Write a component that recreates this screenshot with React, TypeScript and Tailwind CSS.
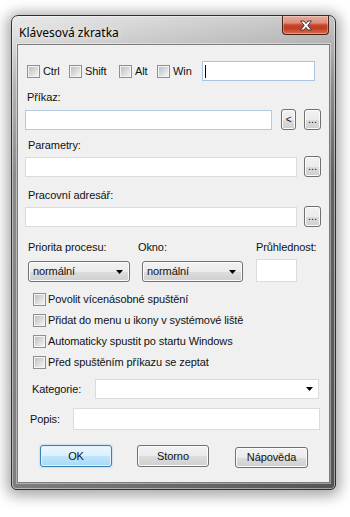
import React from 'react'

function CheckBox() {
  return (
    <span className="w-[13px] h-[13px] shrink-0 border border-[#8f8f8f] bg-[#f4f4f4] flex items-center justify-center">
      <span className="w-[9px] h-[9px] bg-[linear-gradient(135deg,#bcc0c5_0%,#dcdcdc_55%,#f4f4f4_100%)]" />
    </span>
  )
}

function Check({ label, className = '' }: { label: string; className?: string }) {
  return (
    <label className={`flex items-center gap-[3px] ${className}`}>
      <CheckBox />
      <span>{label}</span>
    </label>
  )
}

function Btn({
  children,
  className = '',
  primary = false,
}: {
  children: React.ReactNode
  className?: string
  primary?: boolean
}) {
  return (
    <div
      className={`flex items-center justify-center shrink-0 rounded-[3px] border ${
        primary
          ? 'border-[#3c7fb1] bg-[linear-gradient(#eaf6fd_0%,#d9f0fc_50%,#bee6fd_51%,#a7d9f5_100%)] shadow-[inset_0_0_0_1px_#dff2fd,0_0_2px_rgba(60,127,177,0.5)]'
          : 'border-[#707070] bg-[linear-gradient(#f2f2f2_0%,#ebebeb_50%,#dddddd_51%,#cfcfcf_100%)] shadow-[inset_0_0_0_1px_#fcfcfc]'
      } ${className}`}
    >
      {children}
    </div>
  )
}

function Arrow() {
  return (
    <svg width="7" height="4" viewBox="0 0 7 4" className="shrink-0">
      <polygon points="0,0 7,0 3.5,4" fill="#000" />
    </svg>
  )
}

function Combo({ value, className = '' }: { value: string; className?: string }) {
  return (
    <Btn className={`justify-between! pl-[4px] pr-[6px] ${className}`}>
      <span>{value}</span>
      <Arrow />
    </Btn>
  )
}

function Field({ className = '', border = 'border-[#d9dbdf]', children }: { className?: string; border?: string; children?: React.ReactNode }) {
  return <div className={`shrink-0 bg-white border ${border} ${className}`}>{children}</div>
}

function CloseButton() {
  return (
    <div className="w-[47px] h-[19px] rounded-b-[4px] border border-t-0 border-[#4a2219] bg-[linear-gradient(#e8ab9c_0%,#dc8f7a_38%,#c8452c_50%,#c13b22_68%,#d7714f_100%)] shadow-[inset_0_0_0_1px_rgba(255,255,255,0.3)] flex items-center justify-center">
      <svg width="14" height="11" viewBox="0 0 14 11">
        <path
          d="M1.5 1 H5 L7 3.6 L9 1 H12.5 L8.8 5.5 L12.5 10 H9 L7 7.4 L5 10 H1.5 L5.2 5.5 Z"
          fill="#fff"
          stroke="#3d3d3d"
          strokeWidth="1"
          strokeLinejoin="round"
        />
      </svg>
    </div>
  )
}

export default function App() {
  return (
    <div className="w-[350px] h-[517px] bg-white overflow-hidden pt-[15px] pl-[11px] font-['Liberation_Sans',Arial,sans-serif] text-[11px] leading-[13px] tracking-[-0.1px] text-[#111]">
      <div className="w-[325px] h-[475px] flex flex-col rounded-t-[7px] rounded-b-[5px] border border-[#303030] bg-[linear-gradient(to_right,rgba(255,255,255,0.18),rgba(0,0,0,0.14)),linear-gradient(#e6e6e6_0px,#cfcfcf_28px,#a4a4a4_70px,#727272_160px,#626262_100%)] shadow-[0_2px_14px_4px_rgba(0,0,0,0.35),inset_0_0_0_1px_rgba(255,255,255,0.45)]">
        {/* titulek */}
        <div className="h-[28px] shrink-0 flex items-start justify-between pl-[7px] pr-[6px]">
          <span className="pt-[9px] font-['Noto_Sans',sans-serif] text-[12px] leading-[15px] tracking-normal text-black text-shadow-[0_0_7px_#fff]">
            Klávesová zkratka
          </span>
          <CloseButton />
        </div>

        {/* klientská oblast */}
        <div className="mx-[5px] mb-[6px] flex-1 flex flex-col border border-[#7d7d7d] bg-[#f0f0f0] shadow-[0_0_0_1px_rgba(255,255,255,0.4)]">
          {/* klávesy */}
          <div className="mt-[16px] h-[20px] flex items-center pl-[9px]">
            <Check label="Ctrl" className="w-[42px]" />
            <Check label="Shift" className="w-[50px]" />
            <Check label="Alt" className="w-[38px]" />
            <Check label="Win" className="w-[45px]" />
            <Field className="w-[113px] h-[20px] flex items-center pl-[2px]" border="border-[#a9c4de]">
              <span className="w-px h-[13px] bg-black" />
            </Field>
          </div>

          <div className="mt-[10px] pl-[9px]">Příkaz:</div>
          <div className="mt-[5px] h-[21px] flex items-start pl-[7px]">
            <Field className="mt-[1px] w-[247px] h-[20px]" border="border-[#b3cbe1]" />
            <Btn className="ml-[9px] w-[15px] h-[21px] text-[10px]">&lt;</Btn>
            <Btn className="ml-[8px] w-[17px] h-[21px]">...</Btn>
          </div>

          <div className="mt-[9px] pl-[10px]">Parametry:</div>
          <div className="mt-[4px] h-[21px] flex items-start pl-[7px]">
            <Field className="mt-[1px] w-[272px] h-[20px]" />
            <Btn className="ml-[7px] w-[17px] h-[21px]">...</Btn>
          </div>

          <div className="mt-[12px] pl-[10px]">Pracovní adresář:</div>
          <div className="mt-[4px] h-[21px] flex items-start pl-[7px]">
            <Field className="mt-[1px] w-[272px] h-[20px]" />
            <Btn className="ml-[7px] w-[17px] h-[21px]">...</Btn>
          </div>

          <div className="mt-[14px] flex pl-[10px]">
            <span className="w-[110px]">Priorita procesu:</span>
            <span className="w-[118px]">Okno:</span>
            <span>Průhlednost:</span>
          </div>
          <div className="mt-[5px] h-[23px] flex items-end pl-[10px]">
            <Combo value="normální" className="w-[102px] h-[21px]" />
            <Combo value="normální" className="ml-[12px] w-[101px] h-[21px]" />
            <Field className="ml-[13px] w-[41px] h-[23px]" />
          </div>

          <div className="mt-[7px] flex flex-col pl-[15px]">
            {[
              'Povolit vícenásobné spuštění',
              'Přidat do menu u ikony v systémové liště',
              'Automaticky spustit po startu Windows',
              'Před spuštěním příkazu se zeptat',
            ].map((t) => (
              <label key={t} className="h-[21px] flex items-center gap-[2px]">
                <CheckBox />
                <span>{t}</span>
              </label>
            ))}
          </div>

          <div className="mt-[6px] h-[20px] flex items-center pl-[14px]">
            <span className="w-[63px]">Kategorie:</span>
            <Field className="w-[224px] h-[20px] flex items-center justify-end pr-[5px]">
              <Arrow />
            </Field>
          </div>

          <div className="mt-[9px] h-[22px] flex items-center pl-[12px]">
            <span className="w-[43px]">Popis:</span>
            <Field className="w-[247px] h-[22px]" />
          </div>

          <div className="mt-[15px] h-[23px] flex items-start pl-[22px]">
            <Btn primary className="w-[72px] h-[22px]">OK</Btn>
            <Btn className="ml-[25px] w-[72px] h-[22px]">Storno</Btn>
            <Btn className="ml-[26px] mt-[2px] w-[73px] h-[21px]">Nápověda</Btn>
          </div>
        </div>
      </div>
    </div>
  )
}
